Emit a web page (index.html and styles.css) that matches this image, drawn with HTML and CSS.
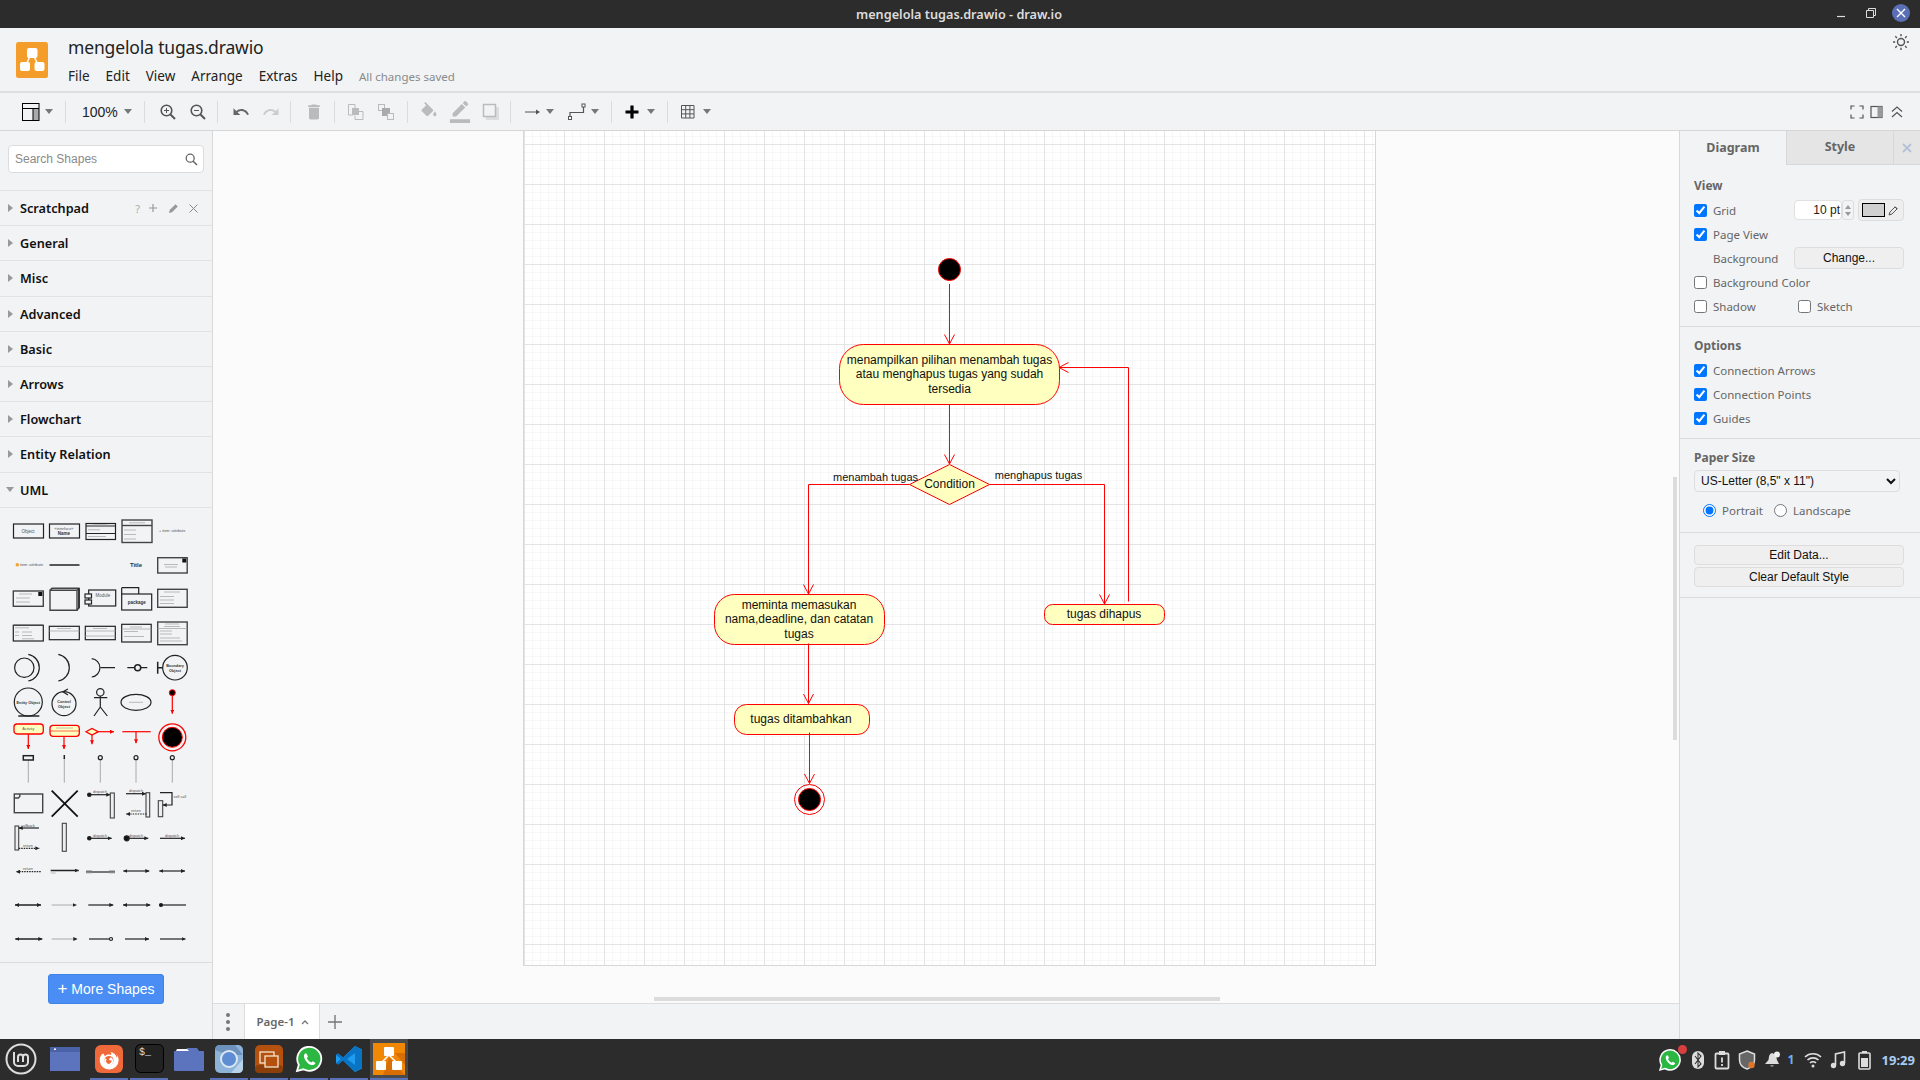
FILE: index.html
```html
<!DOCTYPE html>
<html lang="en">
<head>
<meta charset="utf-8">
<title>mengelola tugas.drawio - draw.io</title>
<link rel="stylesheet" href="styles.css">
</head>
<body>
<svg class="defs" width="0" height="0"><defs>
<marker id="a" markerWidth="4" markerHeight="4" refX="4" refY="2" orient="auto-start-reverse" markerUnits="userSpaceOnUse"><path d="M0 0L4 2L0 4z" fill="#222"/></marker>
<marker id="ar" markerWidth="4" markerHeight="4" refX="4" refY="2" orient="auto" markerUnits="userSpaceOnUse"><path d="M0 0L4 2L0 4z" fill="#f00"/></marker>
</defs></svg>
<div class="app">
  <div class="titlebar">
    <span class="wintitle">mengelola tugas.drawio - draw.io</span>
    <div class="winbtns">
      <svg width="16" height="16" viewBox="0 0 16 16"><path d="M3 11.5h8" stroke="#ddd" stroke-width="1.2"/></svg>
      <svg width="16" height="16" viewBox="0 0 16 16"><path d="M3.5 5.5h7v7h-7z M5.5 5.5V3.5h7v7h-2" fill="none" stroke="#ddd"/></svg>
      <span class="winclose"><svg width="10" height="10" viewBox="0 0 10 10"><path d="M1 1l8 8M9 1l-8 8" stroke="#fff" stroke-width="1.4"/></svg></span>
    </div>
  </div>
  <header class="header">
    <svg class="logo" width="32" height="36" viewBox="0 0 32 36"><rect width="32" height="36" rx="2.5" fill="#f59d2a"/><path d="M16 10L9 25M16 10L23 25" stroke="#fff" stroke-width="1.5"/><rect x="11" y="6" width="10.5" height="10" rx="2" fill="#fff"/><rect x="4" y="20" width="10" height="9" rx="2" fill="#fff"/><rect x="18.5" y="20" width="10" height="9" rx="2" fill="#fff"/></svg>
    <div class="docinfo">
      <div class="doctitle">mengelola tugas.drawio</div>
      <nav class="menubar"><span>File</span><span>Edit</span><span>View</span><span>Arrange</span><span>Extras</span><span>Help</span><span class="saved">All changes saved</span></nav>
    </div>
    <svg class="sun" width="18" height="18" viewBox="0 0 18 18"><circle cx="9" cy="9" r="3.5" fill="none" stroke="#555" stroke-width="1.4"/><path d="M9 1v2.2M9 14.8V17M1 9h2.2M14.8 9H17M3.3 3.3l1.6 1.6M13.1 13.1l1.6 1.6M3.3 14.7l1.6-1.6M13.1 4.9l1.6-1.6" stroke="#555" stroke-width="1.4"/></svg>
  </header>
  <div class="toolbar">
    <div class="tg g1"><svg width="18" height="18" viewBox="0 0 18 18"><rect x="11" y="5.5" width="6" height="12" fill="#aaa"/><rect x=".5" y=".5" width="16.5" height="17" fill="none" stroke="#000"/><path d="M.5 5.5H17M11 5.5V17.5" stroke="#000"/></svg><i class="caret"></i></div>
    <div class="tg g2"><span class="zoomval">100%</span><i class="caret"></i></div>
    <div class="tg g3">
      <span class="tb"><svg width="18" height="18" viewBox="0 0 18 18"><circle cx="7.5" cy="7.5" r="5.3" fill="none" stroke="#555" stroke-width="1.6"/><path d="M11.5 11.5L16 16" stroke="#555" stroke-width="2"/><path d="M5 7.5h5M7.5 5v5" stroke="#555"/></svg></span>
      <span class="tb"><svg width="18" height="18" viewBox="0 0 18 18"><circle cx="7.5" cy="7.5" r="5.3" fill="none" stroke="#555" stroke-width="1.6"/><path d="M11.5 11.5L16 16" stroke="#555" stroke-width="2"/><path d="M5 7.5h5" stroke="#555"/></svg></span>
    </div>
    <div class="tg g3">
      <span class="tb"><svg width="18" height="18" viewBox="0 0 24 24"><path fill="#666" d="M12.5 8c-2.65 0-5.05.99-6.9 2.6L2 7v9h9l-3.62-3.62c1.39-1.16 3.16-1.88 5.12-1.88 3.54 0 6.55 2.31 7.6 5.5l2.37-.78C21.08 11.03 17.15 8 12.5 8z"/></svg></span>
      <span class="tb"><svg width="18" height="18" viewBox="0 0 24 24"><path fill="#ccc" d="M18.4 10.6C16.55 8.99 14.15 8 11.5 8c-4.65 0-8.58 3.03-9.96 7.22L3.9 16c1.05-3.19 4.05-5.5 7.6-5.5 1.95 0 3.73.72 5.12 1.88L13 16h9V7l-3.6 3.6z"/></svg></span>
    </div>
    <div class="tg g5">
      <span class="tb"><svg width="20" height="20" viewBox="0 0 24 24"><path fill="#bbb" d="M6 19c0 1.1.9 2 2 2h8c1.1 0 2-.9 2-2V7H6v12zM19 4h-3.5l-1-1h-5l-1 1H5v2h14V4z"/></svg></span>
    </div>
    <div class="tg g6">
      <span class="tb"><svg width="18" height="18" viewBox="0 0 18 18"><path d="M6 12H1.5V1.500H8V5" fill="none" stroke="#bbb"/><rect x="5" y="5" width="7" height="7" fill="#bbb"/><path d="M12 8.500h4v8H8V12.500" fill="none" stroke="#bbb"/></svg></span>
      <span class="tb"><svg width="18" height="18" viewBox="0 0 18 18"><rect x="1.500" y="1.500" width="6" height="6" fill="#f1f3f5" stroke="#bbb"/><rect x="5" y="5" width="8" height="8" fill="#aaa"/><rect x="10.500" y="10.500" width="6" height="6" fill="#f1f3f5" stroke="#bbb"/></svg></span>
    </div>
    <div class="tg g7">
      <span class="tb"><svg width="20" height="20" viewBox="0 0 24 24"><path fill="#bbb" d="M16.560 8.940L7.620 0 6.210 1.410l2.380 2.380-5.150 5.150c-.59.59-.59 1.540 0 2.120l5.500 5.500c.29.290.68.440 1.060.44s.77-.15 1.060-.44l5.500-5.500c.59-.58.59-1.530 0-2.120zM19 11.500s-2 2.170-2 3.500c0 1.100.9 2 2 2s2-.9 2-2c0-1.330-2-3.500-2-3.500z"/></svg></span>
      <span class="tb"><svg width="22" height="22" viewBox="0 0 24 24"><path fill="#bbb" d="M17.750 7L14 3.250l-10 10V17h3.750l10-10zm2.960-2.960c.39-.39.39-1.020 0-1.410L18.370.29c-.39-.39-1.020-.39-1.410 0L15 2.250 18.750 6l1.960-1.960zM1 20h22v4H1z"/></svg></span>
      <span class="tb"><svg width="18" height="18" viewBox="0 0 18 18"><rect x="4" y="4" width="13" height="13" fill="#ddd"/><rect x="1.500" y="1.500" width="12" height="12" fill="#f1f3f5" stroke="#bbb" stroke-width="1.500"/></svg></span>
    </div>
    <div class="tg g8">
      <svg width="18" height="18" viewBox="0 0 18 18"><path d="M1 9h12" stroke="#555"/><path d="M12 6.500L16 9l-4 2.500z" fill="#555"/></svg><i class="caret"></i>
      <svg class="wp" width="20" height="18" viewBox="0 0 20 18"><path d="M3 14V9.500h13.500V4" fill="none" stroke="#555" stroke-width="1.200"/><rect x="1.500" y="13.500" width="3" height="3" fill="#fff" stroke="#555"/><rect x="15" y="1" width="3" height="3" fill="#fff" stroke="#555"/></svg><i class="caret"></i>
    </div>
    <div class="tg g9"><svg width="18" height="18" viewBox="0 0 18 18"><path d="M9 2.500v13M2.500 9h13" stroke="#000" stroke-width="3.200"/></svg><i class="caret"></i></div>
    <div class="tg g10"><svg width="18" height="18" viewBox="0 0 18 18"><path d="M2.500 2.500h12.500v12.500H2.500zM2.500 6.700h12.500M2.500 10.900h12.500M6.700 2.500v12.500M10.900 2.500v12.500" fill="none" stroke="#555"/></svg><i class="caret"></i></div>
    <div class="tbright">
      <svg width="14" height="14" viewBox="0 0 14 14"><path d="M1 4.500V1h3.500M9.500 1H13v3.500M13 9.500V13H9.500M4.500 13H1V9.500" fill="none" stroke="#555" stroke-width="1.200"/></svg>
      <svg width="14" height="14" viewBox="0 0 14 14"><rect x="1" y="1.500" width="11" height="11" fill="none" stroke="#555" stroke-width="1.200"/><rect x="7.500" y="1.500" width="4.500" height="11" fill="#999"/></svg>
      <svg width="14" height="14" viewBox="0 0 14 14"><path d="M2 6.500L7 2l5 4.500M2 12l5-4.500 5 4.500" fill="none" stroke="#555" stroke-width="1.200"/></svg>
    </div>
  </div>
  <main class="main">
    <aside class="sidebar">
      <div class="searchwrap"><div class="search"><span>Search Shapes</span><svg width="13" height="13" viewBox="0 0 13 13"><circle cx="5.200" cy="5.200" r="4" fill="none" stroke="#666" stroke-width="1.300"/><path d="M8.200 8.200L12 12" stroke="#666" stroke-width="1.600"/></svg></div></div>
      <div class="sec"><i class="tri"></i><b>Scratchpad</b>
        <span class="secacts"><span class="q">?</span><svg width="10" height="10" viewBox="0 0 10 10"><path d="M5 1v8M1 5h8" stroke="#999" stroke-width="1.200"/></svg><svg class="pen" width="11" height="11" viewBox="0 0 11 11"><path d="M1 10l.7-3L7.500 1.200l2.300 2.300L4 9.300z" fill="#999"/></svg><svg width="9" height="9" viewBox="0 0 9 9"><path d="M.5.500l8 8M8.500.500l-8 8" stroke="#888"/></svg></span></div>
      <div class="sec"><i class="tri"></i><b>General</b></div>
      <div class="sec"><i class="tri"></i><b>Misc</b></div>
      <div class="sec"><i class="tri"></i><b>Advanced</b></div>
      <div class="sec"><i class="tri"></i><b>Basic</b></div>
      <div class="sec"><i class="tri"></i><b>Arrows</b></div>
      <div class="sec"><i class="tri"></i><b>Flowchart</b></div>
      <div class="sec"><i class="tri"></i><b>Entity Relation</b></div>
      <div class="sec"><i class="tri open"></i><b>UML</b></div>
      <div class="shapes">
        <svg class="sh" viewBox="0 0 36 34"><rect x="3.500" y="10" width="30" height="14"/><text x="18" y="18.500" class="t c">Object</text></svg>
        <svg class="sh" viewBox="0 0 36 34"><rect x="3.500" y="10" width="30" height="14"/><text x="18" y="15.500" class="t c s">«interface»</text><text x="18" y="20.500" class="t c b">Name</text></svg>
        <svg class="sh" viewBox="0 0 36 34"><rect x="4" y="9.500" width="29.500" height="16"/><path d="M4 12h29.500M4 19.500h29.500"/><path class="g" d="M11 10.800h14M6 15.800h12M6 22.500h18"/></svg>
        <svg class="sh" viewBox="0 0 36 34"><rect x="4" y="6" width="30" height="22.500" class="d"/><path class="d" d="M4 11.500h30"/><path class="g" d="M11 8.800h16M6 16h12M6 20.500h12M6 25h12"/></svg>
        <svg class="sh" viewBox="0 0 36 34"><text x="5" y="18.300" class="t s">+ item: attribute</text></svg>

        <svg class="sh" viewBox="0 0 36 34"><rect x="5.800" y="15.300" width="3" height="3" class="o"/><text x="10" y="18.300" class="t s">item: attribute</text></svg>
        <svg class="sh" viewBox="0 0 36 34"><path class="th" d="M3.500 17h30"/></svg>
        <svg class="sh" viewBox="0 0 36 34"></svg>
        <svg class="sh" viewBox="0 0 36 34"><text x="18" y="19" class="t c b l">Title</text></svg>
        <svg class="sh" viewBox="0 0 36 34"><rect x="3.700" y="9.700" width="29.500" height="15.300" class="d"/><rect x="28.300" y="10.500" width="4" height="4" class="k"/><path class="g" d="M10 16.500h14M11 19h12"/></svg>

        <svg class="sh" viewBox="0 0 36 34"><rect x="3.300" y="9" width="30" height="15.300" class="d"/><rect x="28.300" y="10" width="4" height="4" class="k"/><path class="g" d="M9 12h13M6 16h14M6 20h14"/></svg>
        <svg class="sh" viewBox="0 0 36 34"><path class="d" d="M4 8.300h27v20H4zM4 8.300l2-2h27v19.500l-2 2.500M31 8.300l2-2"/><path class="th" d="M33 6.300v20"/></svg>
        <svg class="sh" viewBox="0 0 36 34"><rect x="6.700" y="8" width="27" height="16"/><rect x="3" y="12" width="6.500" height="4" class="w"/><rect x="3" y="18" width="6.500" height="4" class="w"/><text x="21" y="14.500" class="t c">Module</text></svg>
        <svg class="sh" viewBox="0 0 36 34"><path d="M3.700 5.700h17V12M3.700 5.700V12"/><rect x="3.700" y="12" width="30" height="16"/><text x="18.700" y="22" class="t c b">package</text></svg>
        <svg class="sh" viewBox="0 0 36 34"><rect x="3.700" y="7.300" width="29.500" height="18" class="d"/><path class="g" d="M10 10h16M6 14.500h14M6 18h14M6 21.500h14"/></svg>

        <svg class="sh" viewBox="0 0 36 34"><rect x="3.300" y="9.300" width="30" height="15.700"/><path class="d" d="M3.300 9.300h30"/><path class="g" d="M5 11.800h14M5 16h4M12 16h10M5 19.500h4M12 19.500h10M12 22.800h12"/></svg>
        <svg class="sh" viewBox="0 0 36 34"><rect x="3.300" y="10.300" width="30" height="13.400"/><path class="g" d="M11 12.500h14M3.300 15h30"/></svg>
        <svg class="sh" viewBox="0 0 36 34"><rect x="3.300" y="10.300" width="30" height="13.400"/><path class="g" d="M11 12.500h14M3.300 15h30M3.300 20h30"/></svg>
        <svg class="sh" viewBox="0 0 36 34"><rect x="3.700" y="8.300" width="29.500" height="17.700"/><path class="g" d="M12 11h12M3.700 13h29.500M6 15.500h14M6 20.500h20"/></svg>
        <svg class="sh" viewBox="0 0 36 34"><rect x="3.700" y="6" width="29.500" height="22.700" class="d"/><path class="g" d="M11 8h14M10 10.500h16M3.700 12.500h29.500M6 15h12M6 18h12M6 22h20M6 25h22"/></svg>

        <svg class="sh" viewBox="0 0 36 34"><circle cx="14.300" cy="17.700" r="9.700"/><path d="M18.300 4.300A13.600 13.600 0 0 1 18.300 31"/></svg>
        <svg class="sh" viewBox="0 0 36 34"><path d="M12.300 4.300A13.600 13.600 0 0 1 12.300 31"/></svg>
        <svg class="sh" viewBox="0 0 36 34"><path d="M9.700 8.700A9.200 9.200 0 0 1 9.700 27M18.700 17.700H33"/></svg>
        <svg class="sh" viewBox="0 0 36 34"><path d="M9.300 17.700h7M22.700 17.700h6.600"/><circle cx="19.700" cy="17.700" r="3" class="bold"/></svg>
        <svg class="sh" viewBox="0 0 36 34"><circle cx="21" cy="17.700" r="12.300"/><path class="bold" d="M3.700 11.700v12M3.700 17.700h5"/><text x="21" y="16.500" class="t c s b">Boundary</text><text x="21" y="21.500" class="t c s b">Object</text></svg>

        <svg class="sh" viewBox="0 0 36 34"><circle cx="18.300" cy="18" r="14"/><path class="bold" d="M8.300 32h21"/><text x="18.300" y="19.500" class="t c s b">Entity Object</text></svg>
        <svg class="sh" viewBox="0 0 36 34"><circle cx="18" cy="19.700" r="12"/><path d="M22 5L17 7.700 22 11"/><text x="18" y="18.500" class="t c s b">Control</text><text x="18" y="23.500" class="t c s b">Object</text></svg>
        <svg class="sh" viewBox="0 0 36 34"><circle cx="18.300" cy="8.300" r="3.700"/><path d="M18.300 12v11M12 13.700h13.300M18.300 23L12 32M18.300 23l7 9"/></svg>
        <svg class="sh" viewBox="0 0 36 34"><ellipse cx="18" cy="18.300" rx="15" ry="8"/><path class="g" d="M11 18.300h14"/></svg>
        <svg class="sh" viewBox="0 0 36 34"><circle cx="18.300" cy="8.700" r="3" class="rk"/><path class="r" d="M18.300 11.700v18" marker-end="url(#ar)"/></svg>

        <svg class="sh" viewBox="0 0 36 34"><rect x="4" y="6" width="29.300" height="10" rx="3" class="ry"/><path class="r" d="M18.300 16v15" marker-end="url(#ar)"/><text x="18.300" y="12" class="t c s">Activity</text></svg>
        <svg class="sh" viewBox="0 0 36 34"><rect x="4" y="7.300" width="29.300" height="11" rx="3" class="ry"/><path class="rt" d="M4 13h29.300"/><path class="g" d="M10 10h17"/><path class="r" d="M18 18.300V31" marker-end="url(#ar)"/></svg>
        <svg class="sh" viewBox="0 0 36 34"><path class="ry" d="M4 13.700l6-3.300 6.300 3.300-6.300 3.300z"/><path class="r" d="M16.300 13.700H32" marker-end="url(#ar)"/><path class="r" d="M10 17v9.300" marker-end="url(#ar)"/></svg>
        <svg class="sh" viewBox="0 0 36 34"><path class="r" d="M4.300 13.700h28.400"/><path class="r" d="M18 13.700v11.600" marker-end="url(#ar)"/></svg>
        <svg class="sh" viewBox="0 0 36 34"><circle cx="18.300" cy="19.300" r="13.500" class="rn"/><circle cx="18.300" cy="19.300" r="10" class="rk"/></svg>

        <svg class="sh" viewBox="0 0 36 34"><path class="gl" d="M18.300 8v22.700"/><rect x="13.300" y="3.700" width="10" height="4.300" class="bold w"/></svg>
        <svg class="sh" viewBox="0 0 36 34"><path class="gl" d="M18.300 6v24.700"/><path class="bold" d="M18.300 3v4"/></svg>
        <svg class="sh" viewBox="0 0 36 34"><path class="gl" d="M18.300 8v22.700"/><circle cx="18.300" cy="5.700" r="2" class="w"/></svg>
        <svg class="sh" viewBox="0 0 36 34"><path class="gl" d="M18 8v22.700"/><circle cx="18" cy="5.700" r="2" class="w"/></svg>
        <svg class="sh" viewBox="0 0 36 34"><path class="gl" d="M18.300 8v22.700"/><circle cx="18.300" cy="5.700" r="2" class="w"/></svg>

        <svg class="sh" viewBox="0 0 36 34"><rect x="4.300" y="8" width="28.400" height="18.700" class="d"/><path class="d" d="M4.300 12h4l1.500-1.500V8"/></svg>
        <svg class="sh" viewBox="0 0 36 34"><path class="th2" d="M5.700 4.700l26 26M31.700 4.700l-26 26"/></svg>
        <svg class="sh" viewBox="0 0 36 34"><circle cx="7.300" cy="8.700" r="1.700" class="kn"/><path d="M7.300 8.700h21" marker-end="url(#a)"/><rect x="28.300" y="7" width="4" height="25" class="dw"/><text x="18" y="7" class="t c s">dispatch</text></svg>
        <svg class="sh" viewBox="0 0 36 34"><path d="M8 7.700h20" marker-end="url(#a)"/><rect x="28" y="6.700" width="3.700" height="24.300" class="dw"/><path class="da" d="M28.700 28H8" marker-end="url(#a)"/><text x="18" y="6" class="t c s">dispatch</text><text x="18" y="26" class="t c s">return</text></svg>
        <svg class="sh" viewBox="0 0 36 34"><rect x="4.300" y="14.700" width="4.400" height="16" class="dw"/><path d="M6 6.700h12v12.300H8.700" marker-end="url(#a)"/><text x="19.500" y="11.500" class="t s">self call</text></svg>

        <svg class="sh" viewBox="0 0 36 34"><rect x="5" y="6" width="3.700" height="24" class="dw"/><path d="M29 8H8.700" marker-end="url(#a)"/><path class="da" d="M8.700 28.300h20.600" marker-end="url(#a)"/><text x="18" y="7" class="t c s">callback</text><text x="18" y="26.500" class="t c s">return</text></svg>
        <svg class="sh" viewBox="0 0 36 34"><rect x="16.300" y="3.300" width="4" height="28" class="dw"/></svg>
        <svg class="sh" viewBox="0 0 36 34"><circle cx="7.300" cy="18.300" r="1.700" class="kn"/><path d="M7.300 18.300h22.400" marker-end="url(#a)"/><text x="18" y="16.800" class="t c s">dispatch</text></svg>
        <svg class="sh" viewBox="0 0 36 34"><circle cx="8.700" cy="18.300" r="2.500" class="kn"/><path d="M8.700 18.300h21.600" marker-end="url(#a)"/><text x="18" y="16.800" class="t c s">dispatch</text></svg>
        <svg class="sh" viewBox="0 0 36 34"><path d="M6 18.300h25" marker-end="url(#a)"/><text x="18" y="16.800" class="t c s">dispatch</text></svg>

        <svg class="sh" viewBox="0 0 36 34"><path class="da" d="M30.700 17.700H6" marker-end="url(#a)"/><text x="18" y="15.500" class="t c s">return</text></svg>
        <svg class="sh" viewBox="0 0 36 34"><path class="bold" d="M4.700 16.500h28" marker-end="url(#a)"/><path class="g" d="M4.700 19h5"/></svg>
        <svg class="sh" viewBox="0 0 36 34"><path d="M4 18h29"/><path class="g" d="M4 16.500h6M27 16.500h6M4 19h6M27 19h6"/></svg>
        <svg class="sh" viewBox="0 0 36 34"><path d="M5.300 17h26" marker-start="url(#a)" marker-end="url(#a)"/></svg>
        <svg class="sh" viewBox="0 0 36 34"><path d="M5.300 17H31" marker-start="url(#a)" marker-end="url(#a)"/></svg>

        <svg class="sh" viewBox="0 0 36 34"><path class="bold" d="M5 17h26" marker-start="url(#a)" marker-end="url(#a)"/></svg>
        <svg class="sh" viewBox="0 0 36 34"><path class="gl" d="M5.700 17h25" marker-end="url(#a)"/></svg>
        <svg class="sh" viewBox="0 0 36 34"><path d="M6.300 17h25" marker-end="url(#a)"/></svg>
        <svg class="sh" viewBox="0 0 36 34"><path d="M5 17h27.300" marker-start="url(#a)" marker-end="url(#a)"/></svg>
        <svg class="sh" viewBox="0 0 36 34"><circle cx="7" cy="17" r="1.500" class="kn"/><path d="M7 17h25"/></svg>

        <svg class="sh" viewBox="0 0 36 34"><path class="bold" d="M5.300 17h27" marker-start="url(#a)" marker-end="url(#a)"/></svg>
        <svg class="sh" viewBox="0 0 36 34"><path class="gl" d="M5.700 17h25.600" marker-end="url(#a)"/></svg>
        <svg class="sh" viewBox="0 0 36 34"><path d="M7 17h21"/><circle cx="29" cy="17" r="1.500" class="w"/></svg>
        <svg class="sh" viewBox="0 0 36 34"><path d="M7 17h24" marker-end="url(#a)"/></svg>
        <svg class="sh" viewBox="0 0 36 34"><path d="M6 17h25.500" marker-end="url(#a)"/></svg>
      </div>
      <div class="morewrap"><button class="more"><span class="plus">+</span> More Shapes</button></div>
    </aside>
    <section class="center">
      <div class="canvas">
        <div class="page">
          <svg class="diagram" width="852" height="834" viewBox="524 131 852 834">
            <circle cx="949.500" cy="269.500" r="11" class="start"/>
            <path class="edge" d="M949.500 284V344"/><path class="head" d="M944.500 334.500L949.500 344L954.500 334.500"/>
            <rect class="act" x="839.500" y="344.500" width="220" height="60" rx="24"/>
            <text class="lbl" x="949.500" y="364">menampilkan pilihan menambah tugas</text>
            <text class="lbl" x="949.500" y="378">atau menghapus tugas yang sudah</text>
            <text class="lbl" x="949.500" y="393">tersedia</text>
            <path class="edge" d="M949.500 404.500V464"/><path class="head" d="M944.500 454.500L949.500 464L954.500 454.500"/>
            <path class="act" d="M949.500 464.500L989.500 484.500L949.500 504.500L909.500 484.500Z"/>
            <text class="lbl" x="949.500" y="488">Condition</text>
            <path class="edge" d="M909.500 484.500H808.500V594"/><path class="head" d="M803.500 584.500L808.500 594L813.500 584.500"/>
            <text class="lbl sm" x="875.500" y="481">menambah tugas</text>
            <path class="edge" d="M989.500 484.500H1104.500V604"/><path class="head" d="M1099.500 594.500L1104.500 604L1109.500 594.500"/>
            <text class="lbl sm" x="1038.500" y="479">menghapus tugas</text>
            <rect class="act" x="1044.500" y="604.500" width="120" height="20" rx="8"/>
            <text class="lbl" x="1104" y="618">tugas dihapus</text>
            <path class="edge" d="M1128.500 601.500V367.500H1059"/><path class="head" d="M1068.500 362.500L1059 367.500L1068.500 372.500"/>
            <rect class="act" x="714.500" y="594.500" width="170" height="50" rx="20"/>
            <text class="lbl" x="799" y="609">meminta memasukan</text>
            <text class="lbl" x="799" y="623">nama,deadline, dan catatan</text>
            <text class="lbl" x="799" y="638">tugas</text>
            <path class="edge" d="M808.500 643.500V703.500"/><path class="head" d="M803.500 694L808.500 703.500L813.500 694"/>
            <rect class="act" x="734.500" y="704.500" width="135" height="30" rx="12"/>
            <text class="lbl" x="801" y="723">tugas ditambahkan</text>
            <path class="edge" d="M809.500 732.500V783.500"/><path class="head" d="M804.500 774L809.500 783.500L814.500 774"/>
            <circle cx="809.500" cy="799.500" r="15" class="ring"/>
            <circle cx="809.500" cy="799.500" r="11" class="start"/>
          </svg>
        </div>
        <div class="vscroll"></div>
        <div class="hscroll"></div>
      </div>
      <div class="pagetabs">
        <span class="dots"><i></i><i></i><i></i></span>
        <span class="pagetab">Page-1 <svg width="8" height="6" viewBox="0 0 8 6"><path d="M1 5l3-3 3 3" fill="none" stroke="#777" stroke-width="1.300"/></svg></span>
        <svg class="addpage" width="14" height="14" viewBox="0 0 14 14"><path d="M7 0v14M0 7h14" stroke="#777" stroke-width="1.400"/></svg>
      </div>
    </section>
    <aside class="format">
      <div class="tabs"><div class="tab on">Diagram</div><div class="tab">Style</div><div class="tabx"><svg width="10" height="10" viewBox="0 0 10 10"><path d="M1 1l8 8M9 1l-8 8" stroke="#b3c2d6" stroke-width="1.800"/></svg></div></div>
      <div class="fsec view">
        <h4>View</h4>
        <div class="row"><label class="chk"><input type="checkbox" checked>Grid</label><span class="gridctl"><span class="ptbox">10 pt</span><span class="spin"><i class="up"></i><i class="dn"></i></span><span class="colorbtn"><i class="swatch"></i><svg width="11" height="11" viewBox="0 0 11 11"><path d="M1 10l1-3 5-5 2 2-5 5zM7 1.500l2.500 2.500" fill="none" stroke="#555"/></svg></span></span></div>
        <div class="row"><label class="chk"><input type="checkbox" checked>Page View</label></div>
        <div class="row bg"><span class="bglabel">Background</span><button class="btn change">Change...</button></div>
        <div class="row"><label class="chk"><input type="checkbox">Background Color</label></div>
        <div class="row"><label class="chk shadow"><input type="checkbox">Shadow</label><label class="chk"><input type="checkbox">Sketch</label></div>
      </div>
      <div class="fsec options">
        <h4>Options</h4>
        <div class="row"><label class="chk"><input type="checkbox" checked>Connection Arrows</label></div>
        <div class="row"><label class="chk"><input type="checkbox" checked>Connection Points</label></div>
        <div class="row"><label class="chk"><input type="checkbox" checked>Guides</label></div>
      </div>
      <div class="fsec paper">
        <h4>Paper Size</h4>
        <select class="papersel"><option>US-Letter (8,5" x 11")</option></select>
        <div class="row radios"><label class="rad"><input type="radio" name="o" checked>Portrait</label><label class="rad"><input type="radio" name="o">Landscape</label></div>
      </div>
      <div class="fsec actions">
        <button class="btn wide">Edit Data...</button>
        <button class="btn wide">Clear Default Style</button>
      </div>
    </aside>
  </main>
  <footer class="taskbar">
    <span class="tk mint"><svg width="32" height="32" viewBox="0 0 32 32"><circle cx="16" cy="16" r="14.500" fill="none" stroke="#ddd" stroke-width="2"/><path d="M9 9v10a4 4 0 0 0 4 4h6a4 4 0 0 0 4-4v-5a2.500 2.500 0 0 0-5 0v5M18 14a2.500 2.500 0 0 0-5 0v5" fill="none" stroke="#ddd" stroke-width="2"/></svg></span>
    <span class="tk win"><svg width="30" height="26" viewBox="0 0 30 26"><rect y="1" width="30" height="24" fill="#5b74bd"/><rect y="1" width="30" height="5" fill="#4a62a8"/><rect x="4" y="2.500" width="2" height="1.500" fill="#fff"/></svg></span>
    <span class="tk u"><svg width="28" height="28" viewBox="0 0 28 28"><rect width="28" height="28" rx="6" fill="#f0693a"/><path d="M6.500 9.500a9.500 9.500 0 1 0 15-.5c1 2 1 3 .5 4-1-3-3-5.500-6.500-6 1 1.500 1 2 .5 3-2-1-5-.5-6 1.500l-1.500-3z" fill="#fff"/><circle cx="14" cy="15.500" r="4.500" fill="#f0693a"/><path d="M11 14a3.500 3.500 0 1 0 5-.5l-1.500 1.500" fill="none" stroke="#fff" stroke-width="1.800"/></svg></span>
    <span class="tk u"><svg width="29" height="29" viewBox="0 0 29 29"><rect x=".5" y=".5" width="28" height="28" rx="5" fill="#222" stroke="#000"/><text class="term" x="4" y="11">$_</text></svg></span>
    <span class="tk"><svg width="30" height="26" viewBox="0 0 30 26"><path d="M0 6q0-1 1-1h10l2-3h10l2 3h4q1 0 1 1v18q0 1-1 1H1q-1 0-1-1z" fill="#5b74bd"/><path d="M3 3h10l2 2H2z" fill="#fff"/></svg></span>
    <span class="tk u"><svg width="28" height="28" viewBox="0 0 28 28"><rect width="28" height="28" rx="5" fill="#8db4d8"/><path d="M0 5q0-5 5-5h15l8 10H14z" fill="#6c92bd"/><path d="M16 28h7q5 0 5-5v-9z" fill="#b8d3ea"/><circle cx="14" cy="14" r="8" fill="#5f8dd3" stroke="#dbe7f3" stroke-width="2"/></svg></span>
    <span class="tk u"><svg width="28" height="28" viewBox="0 0 28 28"><rect width="28" height="28" rx="5" fill="#b5510f"/><rect y="20" width="28" height="8" rx="4" fill="#8d3f0a"/><rect x="5" y="7" width="14" height="11" fill="none" stroke="#f6e3d0" stroke-width="1.300"/><rect x="10" y="11" width="13" height="11" fill="#b5510f" stroke="#f6e3d0" stroke-width="1.300"/></svg></span>
    <span class="tk u"><svg width="28" height="28" viewBox="0 0 28 28"><path d="M2 26l1.800-6.300A12 12 0 1 1 8.400 24.300z" fill="#2cb742" stroke="#fff" stroke-width="1.800"/><path d="M10 8.500c-1 1-1.500 2.500-.5 5s4 6 7 6.500c2 .3 3.500-.5 4-2l-2.800-1.800-1.400 1.300c-2-.8-3.700-2.500-4.500-4.500l1.200-1.300L11.500 8.500z" fill="#fff"/></svg></span>
    <span class="tk u"><svg width="28" height="28" viewBox="0 0 28 28"><path d="M20 1l7 3.500v19L20 27 8 15.500l-5 4-2-1.500v-8l2-1.500 5 4z" fill="#1f9cf0"/><path d="M20 1L8 12.500 3 8.500 1 10l5 4-5 4 2 1.500 5-4L20 27l7-3.500v-19zM20 8v12l-8-6z" fill="#0a74c4"/></svg></span>
    <span class="tk u hl"><svg width="32" height="32" viewBox="0 0 32 32"><rect width="32" height="32" fill="#f08705"/><path d="M16 14l16 18H10z M22 10l10 12V10z" fill="#d96f04"/><path d="M16 12L8 20M16 12l8 8" stroke="#fff" stroke-width="1.500"/><rect x="11" y="4" width="10" height="9" rx="1" fill="#fff"/><rect x="3" y="18" width="10" height="9" rx="1" fill="#fff"/><rect x="19" y="18" width="10" height="9" rx="1" fill="#fff"/></svg></span>
    <div class="tray">
      <span class="wa"><svg width="24" height="24" viewBox="0 0 24 24"><path d="M2 22l1.500-5A10 10 0 1 1 7 20.500z" fill="#2cb742" stroke="#fff" stroke-width="1.500"/><path d="M8.500 7.500c-.8.8-1.200 2-.4 4s3.300 5 5.800 5.400c1.700.3 2.900-.4 3.300-1.700l-2.300-1.500-1.200 1.100c-1.600-.7-3-2.100-3.700-3.700l1-1.100L10 7.500z" fill="#fff"/></svg><i class="dot"></i></span>
      <svg width="16" height="20" viewBox="0 0 16 20"><rect x="2" y="1" width="12" height="18" rx="6" fill="#ddd"/><path d="M5 6l6 8-3 3V3l3 3-6 8" fill="none" stroke="#333" stroke-width="1.100"/></svg>
      <svg width="16" height="20" viewBox="0 0 16 20"><rect x="1.500" y="3.500" width="13" height="15" rx="1" fill="none" stroke="#ddd" stroke-width="1.800"/><rect x="5" y="1" width="6" height="4" fill="#ddd"/><path d="M8 7.500v5M8 14v2" stroke="#ddd" stroke-width="1.800"/></svg>
      <svg width="18" height="20" viewBox="0 0 18 20"><path d="M9 1l7.500 3v6c0 4-3 7.500-7.500 9-4.500-1.500-7.500-5-7.500-9V4z" fill="#666" stroke="#ddd" stroke-width="1.500"/><circle cx="13.500" cy="15" r="3.200" fill="#e0762c"/></svg>
      <svg width="18" height="20" viewBox="0 0 18 20"><path d="M8 3C5 4 5 7 4.500 10L1 14h14l-2-4c-.5-3-1.500-6-5-7zM6 15.500a2.500 2.500 0 0 0 4 0z" fill="#ddd"/><circle cx="13" cy="4.500" r="3" fill="#eee"/></svg>
      <span class="count">1</span>
      <svg width="18" height="16" viewBox="0 0 18 16"><path d="M1 5a11.500 11.500 0 0 1 16 0M3.500 8a8 8 0 0 1 11 0M6 11a4.300 4.300 0 0 1 6 0" fill="none" stroke="#ddd" stroke-width="1.700"/><circle cx="9" cy="14" r="1.500" fill="#ddd"/></svg>
      <svg width="16" height="18" viewBox="0 0 16 18"><path d="M5.500 14V3l9-2v11" fill="none" stroke="#ddd" stroke-width="1.600"/><circle cx="3.500" cy="14.500" r="2.700" fill="#ddd"/><circle cx="12.500" cy="12.500" r="2.700" fill="#ddd"/></svg>
      <svg class="batt" width="13" height="20" viewBox="0 0 13 20"><rect x="1" y="3" width="11" height="16" rx="1" fill="none" stroke="#ddd" stroke-width="1.600"/><rect x="4" y="1" width="5" height="2" fill="#ddd"/><rect x="3" y="8" width="7" height="9" fill="#ddd"/></svg>
      <span class="clock">19:29</span>
    </div>
  </footer>
</div>
</body>
</html>
```
FILE: styles.css
```css
* { box-sizing: border-box; }
html, body { margin: 0; height: 100%; overflow: hidden; }
body { font-family: "Noto Sans", sans-serif; color: #222; }
.defs { position: absolute; }
.app { display: flex; flex-direction: column; height: 1080px; background: #f1f3f5; }

.titlebar { height: 28px; background: #2c2c2c; position: relative; display: flex; align-items: center; justify-content: center; flex: none; }
.wintitle { color: #dcdcdc; font-size: 12.700px; font-weight: 600; margin-left: -2px; }
.winbtns { position: absolute; right: 10px; top: 4px; display: flex; align-items: center; gap: 13px; }
.winclose { width: 18px; height: 18px; border-radius: 50%; background: #5a6fb5; display: flex; align-items: center; justify-content: center; }

.header { height: 65px; flex: none; display: flex; background: #f1f3f5; border-bottom: 2px solid #dedede; padding-left: 16px; }
.logo { margin-top: 14px; flex: none; }
.docinfo { margin-left: 20px; }
.doctitle { font-size: 17.5px; line-height: 24px; margin-top: 7px; color: #222; letter-spacing: -.15px; }
.menubar { display: flex; font-size: 13.500px; line-height: 18px; margin-top: 8px; color: #222; }
.menubar span { margin-right: 16px; }
.menubar .saved { font-size: 11.5px; color: #8a8a8a; margin-left: 0; line-height: 19px; }
.sun { margin-left: auto; margin-right: 10px; margin-top: 5px; }

.toolbar { height: 38px; flex: none; display: flex; align-items: center; background: #f1f3f5; border-bottom: 1px solid #d6d6d6; }
.tg { height: 22px; display: flex; align-items: center; flex: none; border-right: 1px solid #dcdcdc; }
.tb { width: 30px; display: flex; justify-content: center; align-items: center; flex: none; }
.caret { display: block; width: 0; height: 0; border-left: 4px solid transparent; border-right: 4px solid transparent; border-top: 5px solid #777; flex: none; margin-left: 5px; }
.g1 { width: 66px; padding-left: 22px; }
.g1 .caret { margin-left: 5px; }
.g2 { width: 79px; padding-left: 16px; }
.zoomval { font: 14px "Liberation Sans", sans-serif; color: #222; width: 36px; }
.g2 .caret { margin-left: 6px; }
.g3 { width: 73px; padding-left: 8px; }
.g5 { width: 44px; padding-left: 8px; }
.g6 { width: 73px; padding-left: 6px; }
.g7 { width: 103px; padding-left: 6px; gap: 1px; }
.g8 { width: 101px; padding-left: 13px; }
.g8 .caret { margin-left: 4px; }
.wp { margin-left: 13px; }
.g9 { width: 56px; padding-left: 11px; }
.g10 { border-right: 0; padding-left: 11px; }
.g10 .caret, .g9 .caret { margin-left: 6px; }
.tbright { margin-left: auto; margin-right: 16px; display: flex; gap: 6px; }

.main { flex: 1; display: flex; min-height: 0; }
.sidebar { width: 213px; flex: none; border-right: 1px solid #d8d8d8; background: #f1f3f5; display: flex; flex-direction: column; }
.searchwrap { height: 60px; padding: 14px 8px 0; border-bottom: 1px solid #e2e2e2; flex: none; }
.search { height: 28px; background: #fff; border: 1px solid #dcdcdc; border-radius: 4px; display: flex; align-items: center; justify-content: space-between; padding: 0 5px 0 6px; font: 12px "Liberation Sans", sans-serif; color: #8a8a8a; }
.sec { height: 35.2px; flex: none; display: flex; align-items: center; border-bottom: 1px solid #e2e2e2; padding-left: 8px; font-size: 12.700px; color: #111; }
.sec b { font-weight: 600; margin-left: 7px; }
.tri { width: 0; height: 0; border-top: 4px solid transparent; border-bottom: 4px solid transparent; border-left: 5px solid #999; flex: none; }
.tri.open { border-left: 4px solid transparent; border-right: 4px solid transparent; border-top: 5px solid #999; border-bottom: 0; margin-left: -2px; margin-right: -1px; }
.secacts { margin-left: auto; margin-right: 14px; display: flex; align-items: center; gap: 10px; color: #aaa; font-size: 11px; }
.secacts .q { margin-right: -2px; }
.shapes { margin-top: 6px; padding-left: 10px; display: grid; grid-template-columns: repeat(5, 36px); grid-auto-rows: 34px; height: 442px; flex: none; }
.sh { width: 36px; height: 34px; display: block; fill: none; stroke: #222; stroke-width: 1.2; }
.sh .t { font: 4.500px "Liberation Sans", sans-serif; fill: #555; stroke: none; }
.sh .c { text-anchor: middle; }
.sh .s { font-size: 3.800px; }
.sh .b { font-weight: 700; fill: #333; }
.sh .l { font-size: 6px; }
.sh .g { stroke: #aaa; stroke-width: .8; }
.sh .gl { stroke: #aaa; stroke-width: 1; }
.sh .d { stroke: #444; stroke-width: 1.4; }
.sh .dw { stroke: #444; stroke-width: 1.1; fill: #eee; }
.sh .th { stroke: #222; stroke-width: 1.500; }
.sh .th2 { stroke: #111; stroke-width: 1.800; }
.sh .bold { stroke-width: 1.500; }
.sh .w { fill: #f1f3f5; }
.sh .k { fill: #111; stroke: none; }
.sh .kn { fill: #111; }
.sh .o { fill: #f0a030; stroke: none; }
.sh .da { stroke-dasharray: 1.500 1; }
.sh .r { stroke: #f00; stroke-width: 1.200; }
.sh .rt { stroke: #f00; stroke-width: .6; }
.sh .ry { stroke: #f00; stroke-width: 1.300; fill: #ffffc0; }
.sh .rk { stroke: #f00; stroke-width: 1; fill: #000; }
.sh .rn { stroke: #f00; stroke-width: 1.300; fill: none; }
.morewrap { border-top: 1px solid #dcdcdc; margin-top: 6px; padding-top: 11px; display: flex; justify-content: center; flex: none; margin-left: 0; }
.more { width: 116px; height: 30px; background: #4a8ef5; border: 1px solid #3f83e8; border-radius: 3px; color: #fff; font: 14px "Liberation Sans", sans-serif; padding: 0; }
.plus { font-size: 17px; }

.center { flex: 1; display: flex; flex-direction: column; min-width: 0; }
.canvas { flex: 1; position: relative; background: #fbfbfb; min-height: 0; overflow: hidden; }
.page {
  position: absolute; left: 310px; top: 0; width: 853px; height: 835px;
  border-right: 1px solid #d8d8d8; border-left: 1px solid #d8d8d8; border-bottom: 1px solid #d8d8d8;
  background-color: #fff;
  background-image:
    linear-gradient(#e4e4e4 1px, transparent 1px),
    linear-gradient(90deg, #e4e4e4 1px, transparent 1px),
    linear-gradient(#f7f7f7 1px, transparent 1px),
    linear-gradient(90deg, #f7f7f7 1px, transparent 1px);
  background-size: 40px 40px, 40px 40px, 8px 8px, 8px 8px;
  background-position: 0 13px, 0 0, 0 5px, 0 0;
}
.diagram { display: block; }
.start { fill: #000; stroke: #f00; }
.ring { fill: #fff; fill-opacity: 0; stroke: #f00; }
.edge { fill: none; stroke: #f00; }
.head { fill: none; stroke: #f00; }
.act { fill: #ffffc0; stroke: #f00; }
.lbl { font: 12px "Liberation Sans", sans-serif; text-anchor: middle; fill: #111; }
.lbl.sm { font-size: 11px; }
.vscroll { position: absolute; right: 2px; top: 346px; width: 4px; height: 263px; background: #dcdcdc; }
.hscroll { position: absolute; left: 441px; bottom: 2px; width: 566px; height: 4px; background: #dcdcdc; }
.pagetabs { height: 36px; flex: none; background: #f1f3f5; border-top: 1px solid #dcdcdc; display: flex; align-items: stretch; }
.dots { width: 31px; display: flex; flex-direction: column; align-items: center; justify-content: center; gap: 3px; }
.dots i { width: 4px; height: 4px; border-radius: 50%; background: #777; display: block; margin-left: -1px; }
.pagetab { width: 76px; background: #fff; border-left: 1px solid #dcdcdc; border-right: 1px solid #dcdcdc; display: flex; align-items: center; justify-content: center; gap: 7px; padding-left: 2px; font-size: 11.5px; font-weight: 600; color: #666; }
.addpage { align-self: center; margin-left: 8px; }

.format { width: 241px; flex: none; border-left: 1px solid #d8d8d8; background: #f1f3f5; font-size: 11.5px; color: #666; }
.tabs { display: flex; height: 34px; }
.tab { width: 107px; background: #e5e5e5; border-bottom: 1px solid #d8d8d8; border-left: 1px solid #d8d8d8; text-align: center; font-size: 12.5px; font-weight: 700; line-height: 32px; color: #666; }
.tab.on { width: 106px; background: #f1f3f5; border: 0; line-height: 33px; }
.tabx { width: 27px; background: #e5e5e5; border-bottom: 1px solid #d8d8d8; border-left: 1px solid #d8d8d8; display: flex; align-items: center; justify-content: center; }
.fsec { border-bottom: 1px solid #dcdcdc; padding-left: 14px; }
.fsec h4 { margin: 0; height: 18px; line-height: 18px; font-size: 12px; font-weight: 700; color: #666; }
.row { height: 24px; display: flex; align-items: center; }
.chk, .rad { display: inline-flex; align-items: center; }
.chk input { margin: 0 6px 0 0; width: 13px; height: 13px; flex: none; }
.rad input { margin: 0 6px 0 0; width: 13px; height: 13px; flex: none; }
.view { height: 162px; padding-top: 12px; }
.view h4 { margin-bottom: 3px; }
.gridctl { margin-left: auto; margin-right: 16px; display: flex; align-items: center; }
.ptbox { width: 48px; height: 20px; background: #fff; border: 1px solid #e0e0e0; border-radius: 4px; font: 12px/19px "Liberation Sans", sans-serif; color: #222; text-align: right; padding-right: 1px; }
.spin { width: 12px; height: 20px; border: 1px solid #ddd; border-radius: 3px; display: flex; flex-direction: column; align-items: center; justify-content: center; gap: 3px; }
.spin i { width: 0; height: 0; border-left: 3.500px solid transparent; border-right: 3.500px solid transparent; display: block; }
.spin .up { border-bottom: 4px solid #999; }
.spin .dn { border-top: 4px solid #999; }
.colorbtn { width: 46px; height: 22px; margin-left: 4px; border: 1px solid #ddd; border-radius: 4px; background: #eee; display: flex; align-items: center; gap: 3px; padding-left: 3px; }
.swatch { width: 23px; height: 14px; background: #d0d0d0; border: 1px solid #000; display: block; flex: none; }
.bglabel { margin-left: 19px; width: 81px; flex: none; }
.btn { background: #efefef; border: 1px solid #ddd; border-radius: 4px; font: 12px "Liberation Sans", sans-serif; color: #111; padding: 0; }
.change { width: 110px; height: 22px; }
.shadow { width: 104px; }
.options { height: 112px; padding-top: 10px; }
.options h4 { margin-bottom: 3px; }
.paper { height: 94px; padding-top: 10px; }
.paper h4 { margin-bottom: 3px; }
.papersel { width: 206px; height: 22px; display: block; font: 12px "Liberation Sans", sans-serif; color: #111; background: #f1f3f5; border: 1px solid #ddd; border-radius: 4px; padding-left: 2px; }
.radios { margin-top: 6px; padding-left: 9px; }
.rad:first-child { width: 71px; }
.actions { height: 65px; padding-top: 12px; }
.wide { display: block; width: 210px; height: 20px; margin-bottom: 2px; }

.taskbar { height: 41px; flex: none; background: #2c2c2c; display: flex; align-items: stretch; }
.tk { width: 38px; margin-left: 2px; display: flex; align-items: center; justify-content: center; border-bottom: 2px solid transparent; flex: none; }
.tk.mint { width: 42px; margin-left: 0; }
.tk.win { width: 46px; margin-left: 0; }
.tk.u { border-bottom-color: #5a71b8; }
.tk.hl { background: #4a4a4a; }
.term { font: 10px "Liberation Mono", monospace; fill: #ddd; }
.tray { margin-left: auto; display: flex; align-items: center; gap: 8px; padding-right: 5px; }
.wa { position: relative; display: block; width: 24px; height: 24px; }
.dot { position: absolute; right: -5px; top: -3px; width: 9px; height: 9px; border-radius: 50%; background: #d8403f; }
.count { color: #6db0f2; font-weight: 700; font-size: 12px; width: 8px; margin-left: -2px; }
.batt { margin-left: 4px; }
.clock { color: #a9cdf2; font-weight: 700; font-size: 13px; margin-left: 3px; }
```
